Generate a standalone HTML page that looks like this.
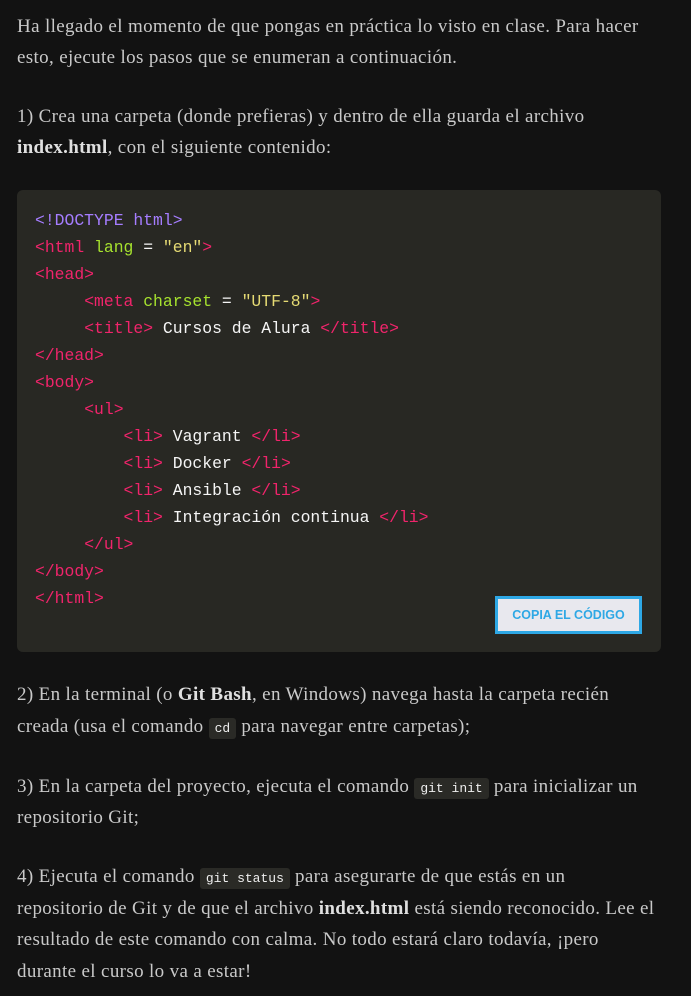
<!DOCTYPE html>
<html><head><meta charset="utf-8"><style>
body{margin:0;background:#121212;width:691px;height:996px;overflow:hidden;font-family:"Liberation Serif",serif;color:#c9c9c9;font-size:19px;letter-spacing:0.35px}
.l{position:absolute;left:17px;white-space:nowrap;line-height:24px}
b{color:#e0e0e0}
.ic{font-family:"Liberation Mono",monospace;font-size:13px;letter-spacing:0;background:#2a2a26;color:#eee;padding:3px 6px;border-radius:3px}
.box{position:absolute;left:17px;top:190px;width:644px;height:462px;background:#282823;border-radius:6px}
.c{position:absolute;left:35px;font-family:"Liberation Mono",monospace;font-size:16.4px;letter-spacing:0;white-space:pre;line-height:20px;color:#f5f5f5}
.p{color:#f0246b}.v{color:#a57dff}.g{color:#a6e22e}.y{color:#e6db74}
.btn{position:absolute;left:495px;top:596px;width:141px;height:32px;border:3px solid #2ea8e5;background:#e8e8ee;color:#2ea8e5;font-family:"Liberation Sans",sans-serif;font-weight:bold;font-size:12.5px;letter-spacing:0;text-align:center;line-height:32px}
</style></head><body>
<div class="l" style="top:15px">Ha llegado el momento de que pongas en práctica lo visto en clase. Para hacer</div>
<div class="l" style="top:46px">esto, ejecute los pasos que se enumeran a continuación.</div>
<div class="l" style="top:105px">1) Crea una carpeta (donde prefieras) y dentro de ella guarda el archivo</div>
<div class="l" style="top:136px"><b>index.html</b>, con el siguiente contenido:</div>
<div class="box"></div>
<div class="c" style="top:211px"><span class="v">&lt;!DOCTYPE html&gt;</span></div>
<div class="c" style="top:238px"><span class="p">&lt;html</span> <span class="g">lang</span> = <span class="y">"en"</span><span class="p">&gt;</span></div>
<div class="c" style="top:265px"><span class="p">&lt;head&gt;</span></div>
<div class="c" style="top:292px">     <span class="p">&lt;meta</span> <span class="g">charset</span> = <span class="y">"UTF-8"</span><span class="p">&gt;</span></div>
<div class="c" style="top:319px">     <span class="p">&lt;title&gt;</span> Cursos de Alura <span class="p">&lt;/title&gt;</span></div>
<div class="c" style="top:346px"><span class="p">&lt;/head&gt;</span></div>
<div class="c" style="top:373px"><span class="p">&lt;body&gt;</span></div>
<div class="c" style="top:400px">     <span class="p">&lt;ul&gt;</span></div>
<div class="c" style="top:427px">         <span class="p">&lt;li&gt;</span> Vagrant <span class="p">&lt;/li&gt;</span></div>
<div class="c" style="top:454px">         <span class="p">&lt;li&gt;</span> Docker <span class="p">&lt;/li&gt;</span></div>
<div class="c" style="top:481px">         <span class="p">&lt;li&gt;</span> Ansible <span class="p">&lt;/li&gt;</span></div>
<div class="c" style="top:508px">         <span class="p">&lt;li&gt;</span> Integración continua <span class="p">&lt;/li&gt;</span></div>
<div class="c" style="top:535px">     <span class="p">&lt;/ul&gt;</span></div>
<div class="c" style="top:562px"><span class="p">&lt;/body&gt;</span></div>
<div class="c" style="top:589px"><span class="p">&lt;/html&gt;</span></div>
<div class="btn">COPIA EL CÓDIGO</div>
<div class="l" style="top:683px">2) En la terminal (o <b>Git Bash</b>, en Windows) navega hasta la carpeta recién</div>
<div class="l" style="top:715px">creada (usa el comando <span class="ic">cd</span> para navegar entre carpetas);</div>
<div class="l" style="top:775px">3) En la carpeta del proyecto, ejecuta el comando <span class="ic">git init</span> para inicializar un</div>
<div class="l" style="top:806px">repositorio Git;</div>
<div class="l" style="top:865px">4) Ejecuta el comando <span class="ic">git status</span> para asegurarte de que estás en un</div>
<div class="l" style="top:897px">repositorio de Git y de que el archivo <b>index.html</b> está siendo reconocido. Lee el</div>
<div class="l" style="top:928px">resultado de este comando con calma. No todo estará claro todavía, ¡pero</div>
<div class="l" style="top:960px">durante el curso lo va a estar!</div>
</body></html>
